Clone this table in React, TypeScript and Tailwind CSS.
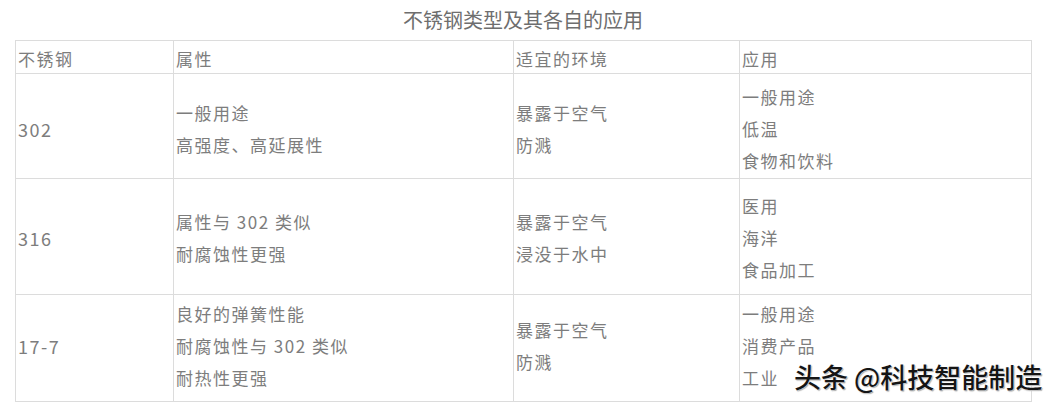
const rows = [
  {
    steel: '302',
    props: ['一般用途', '高强度、高延展性'],
    env: ['暴露于空气', '防溅'],
    apps: ['一般用途', '低温', '食物和饮料'],
    h: 'h-[105px]',
    pad: 'pt-[6px]',
  },
  {
    steel: '316',
    props: ['属性与 302 类似', '耐腐蚀性更强'],
    env: ['暴露于空气', '浸没于水中'],
    apps: ['医用', '海洋', '食品加工'],
    h: 'h-[116px]',
    pad: 'pt-[2px]',
  },
  {
    steel: '17-7',
    props: ['良好的弹簧性能', '耐腐蚀性与 302 类似', '耐热性更强'],
    env: ['暴露于空气', '防溅'],
    apps: ['一般用途', '消费产品', '工业'],
    h: 'h-[107px]',
    pad: 'pb-[4px]',
  },
];

function Lines({ items }: { items: string[] }) {
  return (
    <>
      {items.map((t) => (
        <div key={t}>{t}</div>
      ))}
    </>
  );
}

export default function App() {
  const cell = 'border border-[#dcdcdc] align-middle px-[2px] py-0';
  return (
    <div className="relative w-[1056px] h-[402px] overflow-hidden bg-white font-['Noto_Sans_CJK_SC',sans-serif]">
      <div className="ml-[15px] w-[1016px]">
        <h1 className="h-[40px] pt-[6px] text-center text-[20px] leading-[28px] text-[#6e6e6e] font-normal">
          不锈钢类型及其各自的应用
        </h1>
        <table className="w-[1016px] table-fixed border-collapse text-[17px] leading-[32px] tracking-[1.5px] text-[#7d7d7d]">
          <colgroup>
            <col className="w-[158px]" />
            <col className="w-[340px]" />
            <col className="w-[226px]" />
            <col className="w-[292px]" />
          </colgroup>
          <tbody>
            <tr className="h-[33px]">
              <td className={`${cell} pt-[4px] leading-[28px]`}>不锈钢</td>
              <td className={`${cell} pt-[4px] leading-[28px]`}>属性</td>
              <td className={`${cell} pt-[4px] leading-[28px]`}>适宜的环境</td>
              <td className={`${cell} pt-[4px] leading-[28px]`}>应用</td>
            </tr>
            {rows.map((r) => (
              <tr key={r.steel} className={r.h}>
                <td className={`${cell} ${r.pad} text-[18px]`}>{r.steel}</td>
                <td className={`${cell} ${r.pad}`}>
                  <Lines items={r.props} />
                </td>
                <td className={`${cell} ${r.pad}`}>
                  <Lines items={r.env} />
                </td>
                <td className={`${cell} ${r.pad}`}>
                  <Lines items={r.apps} />
                </td>
              </tr>
            ))}
          </tbody>
        </table>
      </div>
      <div className="absolute left-[794px] top-[359px] text-[27px] leading-[36px] font-medium text-[#151515] [text-shadow:0_0_2px_#fff,0_0_2px_#fff,1px_1px_1px_#888]">
        头条 @科技智能制造
      </div>
    </div>
  );
}
